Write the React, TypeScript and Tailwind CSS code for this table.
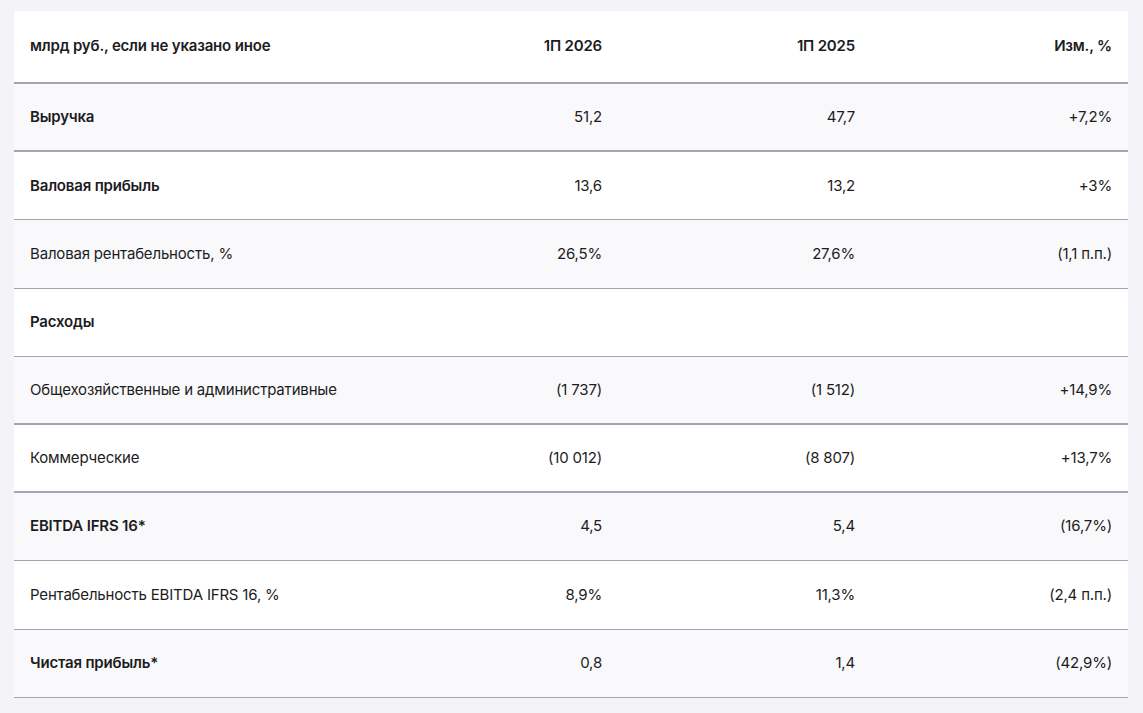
import React from "react";

type Row = { label: string; a: string; b: string; c: string; bold?: boolean; thick?: boolean };

const rows: Row[] = [
  { label: "Выручка", a: "51,2", b: "47,7", c: "+7,2%", bold: true, thick: true },
  { label: "Валовая прибыль", a: "13,6", b: "13,2", c: "+3%", bold: true },
  { label: "Валовая рентабельность, %", a: "26,5%", b: "27,6%", c: "(1,1 п.п.)" },
  { label: "Расходы", a: "", b: "", c: "", bold: true },
  { label: "Общехозяйственные и административные", a: "(1 737)", b: "(1 512)", c: "+14,9%", thick: true },
  { label: "Коммерческие", a: "(10 012)", b: "(8 807)", c: "+13,7%", thick: true },
  { label: "EBITDA IFRS 16*", a: "4,5", b: "5,4", c: "(16,7%)", bold: true },
  { label: "Рентабельность EBITDA IFRS 16, %", a: "8,9%", b: "11,3%", c: "(2,4 п.п.)" },
  { label: "Чистая прибыль*", a: "0,8", b: "1,4", c: "(42,9%)", bold: true },
];

export default function App() {
  return (
    <div
      className="min-h-[713px] w-full bg-[#f4f4f8] pl-[14px] pr-[15px] pt-[11px] text-[15px] tracking-[-0.012em] text-[#1c1c22]"
      style={{ fontFamily: "Inter, 'Noto Sans', sans-serif" }}
    >
      <div className="w-[1114px]">
        <div className="grid h-[73px] grid-cols-[351px_253px_253px_257px] items-center border-b-2 border-[#a3a5b0] bg-white font-semibold">
          <div className="pl-4">млрд руб., если не указано иное</div>
          <div className="pr-4 text-right">1П 2026</div>
          <div className="pr-4 text-right">1П 2025</div>
          <div className="pr-4 text-right">Изм., %</div>
        </div>
        {rows.map((r, i) => (
          <div
            key={i}
            className={
              "grid h-[68.2px] grid-cols-[351px_253px_253px_257px] items-center border-[#a3a5b0] " +
              (r.thick ? "border-b-2 " : "border-b ") +
              (i % 2 === 0 ? "bg-[#f9f9fb]" : "bg-white")
            }
          >
            <div className={"pl-4 whitespace-nowrap " + (r.bold ? "font-semibold" : "")}>{r.label}</div>
            <div className="pr-4 text-right">{r.a}</div>
            <div className="pr-4 text-right">{r.b}</div>
            <div className="pr-4 text-right">{r.c}</div>
          </div>
        ))}
      </div>
    </div>
  );
}
